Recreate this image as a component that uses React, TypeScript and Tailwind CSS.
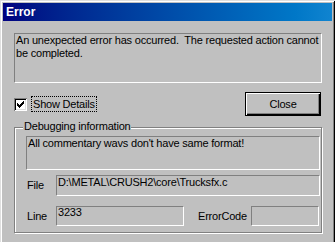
const sunken = "border border-t-[#808080] border-l-[#808080] border-b-white border-r-white";

function CheckMark() {
  // classic 7x7 pixel tick
  const px = [
    [6, 0],
    [5, 1], [6, 1],
    [0, 2], [4, 2], [5, 2], [6, 2],
    [0, 3], [1, 3], [3, 3], [4, 3], [5, 3],
    [0, 4], [1, 4], [2, 4], [3, 4], [4, 4],
    [1, 5], [2, 5], [3, 5],
    [2, 6],
  ];
  return (
    <svg width="7" height="7" viewBox="0 0 7 7" shapeRendering="crispEdges">
      {px.map(([x, y]) => (
        <rect key={`${x}-${y}`} x={x} y={y} width="1" height="1" fill="#000" />
      ))}
    </svg>
  );
}

export default function App() {
  return (
    <div className="w-[335px] h-[242px] bg-[#c0c0c0] p-[3px] flex flex-col overflow-hidden shadow-[inset_1px_1px_#dfdfdf,inset_-1px_0_#000,inset_2px_2px_#fff,inset_-2px_0_#808080] font-['Liberation_Sans',Arial,sans-serif] text-[11px] tracking-[-0.2px] text-black">
      {/* Title bar */}
      <div className="h-[18px] flex items-center pl-[3px] bg-linear-to-r from-[#000080] to-[#1084d0] text-white font-bold text-[12px] tracking-normal">
        Error
      </div>

      <div className="flex flex-col pl-[11px] pr-[10px] pt-[12px]">
        {/* Message */}
        <div className={`h-[50px] w-[308px] ${sunken} px-[1px] leading-[13px] overflow-hidden whitespace-nowrap`}>
          <div>An unexpected error has occurred.&nbsp; The requested action cannot</div>
          <div>be completed.</div>
        </div>

        {/* Checkbox + button */}
        <div className="mt-[9px] h-[24px] flex items-center justify-between">
          <div className="flex items-center">
            <div className="w-[13px] h-[13px] bg-white flex items-center justify-center shadow-[inset_1px_1px_#808080,inset_-1px_-1px_#fff,inset_2px_2px_#000,inset_-2px_-2px_#dfdfdf]">
              <CheckMark />
            </div>
            <span className="ml-[4px] border border-dotted border-black px-[1px] leading-[14px]">Show Details</span>
          </div>
          <button className="w-[76px] h-[24px] mr-[1px] border border-black bg-[#c0c0c0] shadow-[inset_1px_1px_#fff,inset_-1px_-1px_#000,inset_-2px_-2px_#808080] leading-[13px]">
            Close
          </button>
        </div>

        {/* Debugging group */}
        <div className="relative mt-[11px] h-[106px] w-[308px] border border-[#808080] shadow-[inset_1px_1px_#fff,1px_1px_#fff] pl-[11px] pt-[8px] flex flex-col">
          <span className="absolute left-[8px] -top-[9px] px-[1px] bg-[#c0c0c0] leading-[14px]">Debugging information</span>

          <div className={`h-[34px] w-[294px] ${sunken} px-[1px] leading-[13px]`}>
            All commentary wavs don't have same format!
          </div>

          <div className="mt-[5px] h-[21px] flex items-center">
            <span className="w-[30px] pl-[1px]">File</span>
            <div className={`h-full w-[264px] ${sunken} px-[1px] leading-[13px]`}>D:\METAL\CRUSH2\core\Trucksfx.c</div>
          </div>

          <div className="mt-[10px] h-[20px] flex items-center">
            <span className="w-[30px] pl-[1px]">Line</span>
            <div className={`h-full w-[128px] ${sunken} px-[1px] leading-[11px]`}>3233</div>
            <span className="ml-[14px] w-[53px]">ErrorCode</span>
            <div className={`h-full w-[68px] ${sunken}`} />
          </div>
        </div>
      </div>
    </div>
  );
}
